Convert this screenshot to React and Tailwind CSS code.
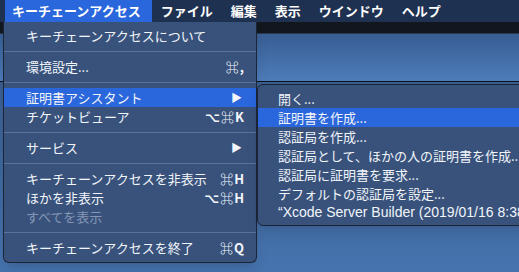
import React from 'react';

const font = { fontFamily: '"Noto Sans CJK JP", "DejaVu Sans", sans-serif' };

const mainItems = [
  { label: 'キーチェーンアクセスについて' },
  { sep: true },
  { label: '環境設定...', key: '⌘,' },
  { sep: true },
  { label: '証明書アシスタント', arrow: true, active: true },
  { label: 'チケットビューア', key: '⌥⌘K' },
  { sep: true },
  { label: 'サービス', arrow: true },
  { sep: true },
  { label: 'キーチェーンアクセスを非表示', key: '⌘H' },
  { label: 'ほかを非表示', key: '⌥⌘H' },
  { label: 'すべてを表示', disabled: true },
  { sep: true },
  { label: 'キーチェーンアクセスを終了', key: '⌘Q' },
];

const subItems = [
  '開く...',
  '証明書を作成...',
  '認証局を作成...',
  '認証局として、ほかの人の証明書を作成...',
  '認証局に証明書を要求...',
  'デフォルトの認証局を設定...',
];

function MenuRow({ item }) {
  if (item.sep) {
    return (
      <div className="h-[12px] flex items-center">
        <div className="w-full h-px bg-[#5b7196]" />
      </div>
    );
  }
  return (
    <div
      className={
        'h-[19px] flex items-center justify-between pl-[22px] pr-[11px] text-[13px] ' +
        (item.active ? 'bg-[#2a66dc] ' : '') +
        (item.disabled ? 'text-[#8496b4]' : 'text-[#f2f5fa]')
      }
    >
      <span className="whitespace-nowrap">{item.label}</span>
      {item.key && <span className="text-[13px] font-bold tracking-[1px]">{item.key}</span>}
      {item.arrow && <span className="text-[11px] mr-[3px]">▶</span>}
    </div>
  );
}

export default function App() {
  const bar = ['ファイル', '編集', '表示', 'ウインドウ', 'ヘルプ'];

  return (
    <div className="relative w-[519px] h-[272px] overflow-hidden bg-[#3f6aa4] flex flex-col" style={font}>
      {/* menu bar */}
      <div className="h-[22px] bg-[#1f3150] flex items-center text-[13px] font-bold text-white">
        <div className="ml-[5px] h-full flex items-center pl-[7px] pr-[11px] bg-[#2a66dc]">キーチェーンアクセス</div>
        {bar.map((b) => (
          <div key={b} className="px-[9px] whitespace-nowrap">{b}</div>
        ))}
      </div>

      {/* desktop behind */}
      <div className="h-[12px] bg-[#12171e] border-b border-[#2b3850]" />
      <div className="h-[48px] bg-gradient-to-b from-[#385d93] to-[#4d7cb9] border-b border-[#0c121c]" />
      <div className="flex-1 bg-gradient-to-b from-[#3a5e90] to-[#4673ae]" />

      {/* main menu */}
      <div className="absolute left-[3px] top-[22px] w-[254px] pt-[4px] pb-[5px] bg-[#38527c] rounded-b-[6px] border border-t-0 border-[#1b2538] shadow-lg">
        {mainItems.map((it, i) => (
          <MenuRow key={i} item={it} />
        ))}
      </div>

      {/* submenu */}
      <div className="absolute left-[257px] top-[84px] w-[300px] pt-[4px] pb-[3px] bg-[#38527c] rounded-[6px] border border-[#1b2538] shadow-lg">
        {subItems.map((s, i) => (
          <div
            key={i}
            className={
              'h-[19px] flex items-center pl-[20px] text-[13px] text-[#f2f5fa] whitespace-nowrap ' +
              (i === 1 ? 'bg-[#2a66dc]' : '')
            }
          >
            {s}
          </div>
        ))}
        <div className="h-[19px] flex items-center pl-[20px] text-[14px] text-[#f2f5fa] whitespace-nowrap font-['Liberation_Sans',sans-serif]">
          “Xcode Server Builder (2019/01/16 8:38)”
        </div>
      </div>
    </div>
  );
}
